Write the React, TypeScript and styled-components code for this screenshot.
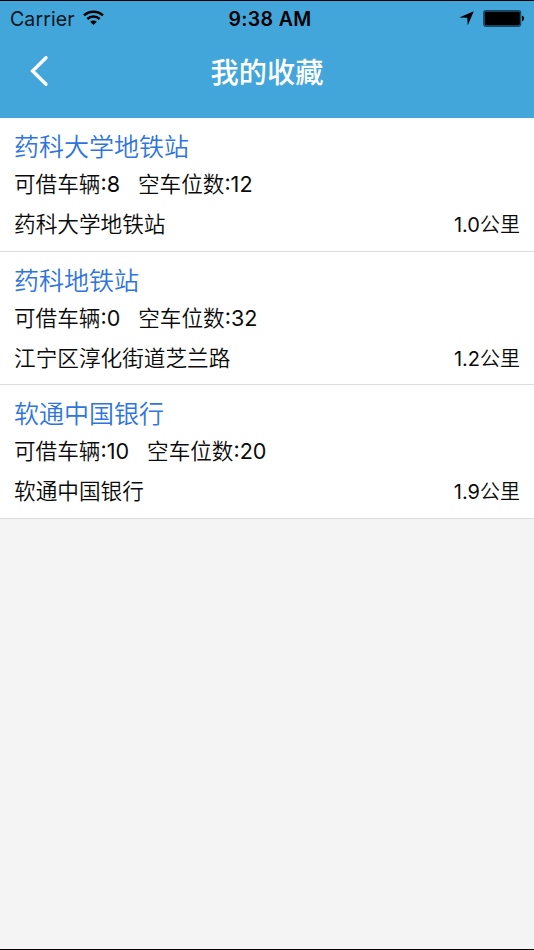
import React from "react";
import styled, { createGlobalStyle } from "styled-components";

const GlobalStyle = createGlobalStyle`
  * { box-sizing: border-box; }
  body { margin: 0; background: #f4f4f4; }
`;

const Screen = styled.div`
  height: 950px;
  display: flex;
  flex-direction: column;
  overflow: hidden;
  background: #f4f4f4;
  border-top: 1px solid #000;
  border-bottom: 1px solid #000;
  font-family: Inter, "Noto Sans CJK SC", sans-serif;
  color: #0b0b0b;
`;

const Header = styled.header`
  flex: none;
  height: 117px;
  background: #42a6db;
`;

const StatusBar = styled.div`
  height: 35px;
  padding: 0 9px 0 10px;
  display: grid;
  grid-template-columns: 1fr auto 1fr;
  align-items: center;
  color: #06131a;
`;

const Carrier = styled.div`
  display: flex;
  align-items: center;
  gap: 8px;
  font-size: 19.5px;
  letter-spacing: 0.1px;

  svg {
    margin-bottom: 2px;
  }
`;

const Clock = styled.div`
  padding-left: 5px;
  font-size: 19.5px;
  font-weight: 600;
  letter-spacing: 0.35px;
  color: #000;
`;

const Indicators = styled.div`
  display: flex;
  justify-content: flex-end;
  align-items: center;
  gap: 9px;
`;

const NavBar = styled.nav`
  height: 70px;
  padding: 0 29px;
  display: grid;
  grid-template-columns: 40px 1fr 40px;
  align-items: center;
`;

const BackButton = styled.button`
  display: flex;
  padding: 0;
  border: 0;
  background: none;
`;

const PageTitle = styled.h1`
  margin: 0;
  padding-top: 4px;
  text-align: center;
  font-size: 28.2px;
  line-height: 40px;
  font-weight: 500;
  color: #fff;
`;

const StationList = styled.ul`
  margin: 0;
  padding: 0;
  list-style: none;
`;

const Station = styled.li`
  height: 133.6px;
  padding: 10px 14px 0 14px;
  background: #fff;
  border-bottom: 1px solid #dcdcdc;
`;

const StationName = styled.div`
  height: 37px;
  line-height: 38px;
  font-size: 25px;
  font-weight: 350;
  color: #2f75e0;
`;

const Counts = styled.div`
  display: flex;
  gap: 18px;
  height: 39px;
  line-height: 39px;
  font-size: 21.6px;
  font-weight: 350;
`;

const Footer = styled.div`
  display: flex;
  justify-content: space-between;
  height: 41px;
  line-height: 41px;
  font-size: 21.65px;
  font-weight: 350;
`;

const Distance = styled.span`
  padding-top: 1px;
  font-size: 20px;
`;

const Figure = styled.span`
  font-weight: 400;
`;

const WifiIcon = () => (
  <svg width="21" height="16" viewBox="0 0 21 16">
    <g fill="none" stroke="#000" strokeWidth="2.5">
      <path d="M1 5.3C6.3.4 14.7.4 20 5.3" />
      <path d="M4.3 9C7.9 5.8 13.1 5.8 16.7 9" />
    </g>
    <path d="M7.2 11.7C9 10.2 12 10.2 13.8 11.7L10.5 15.1Z" fill="#000" />
  </svg>
);

const LocationIcon = () => (
  <svg width="15" height="15" viewBox="0 0 15 15">
    <path d="M14.8 0.2 8.7 14.6 8.3 6.8 0.3 6.5Z" fill="#000" />
  </svg>
);

const BatteryIcon = () => (
  <svg width="42" height="17" viewBox="0 0 42 17">
    <rect x="0.7" y="0.7" width="37" height="15.6" rx="2.2" fill="none" stroke="#16475f" strokeWidth="1.2" />
    <rect x="1.5" y="1.5" width="35.4" height="14" rx="1.4" fill="#000" />
    <path d="M39 5.8C41.8 6.1 41.8 10.9 39 11.2Z" fill="#000" />
  </svg>
);

const BackIcon = () => (
  <svg width="20" height="32" viewBox="0 0 20 32">
    <path d="M17 2.8 3.6 16 17 29.2" fill="none" stroke="#fff" strokeWidth="3.4" strokeLinecap="round" />
  </svg>
);

const stations = [
  { name: "药科大学地铁站", bikes: 8, slots: 12, address: "药科大学地铁站", km: "1.0" },
  { name: "药科地铁站", bikes: 0, slots: 32, address: "江宁区淳化街道芝兰路", km: "1.2" },
  { name: "软通中国银行", bikes: 10, slots: 20, address: "软通中国银行", km: "1.9" },
];

export default function App() {
  return (
    <Screen>
      <GlobalStyle />
      <Header>
        <StatusBar>
          <Carrier>
            Carrier
            <WifiIcon />
          </Carrier>
          <Clock>9:38 AM</Clock>
          <Indicators>
            <LocationIcon />
            <BatteryIcon />
          </Indicators>
        </StatusBar>
        <NavBar>
          <BackButton aria-label="返回">
            <BackIcon />
          </BackButton>
          <PageTitle>我的收藏</PageTitle>
        </NavBar>
      </Header>
      <StationList>
        {stations.map((s) => (
          <Station key={s.name}>
            <StationName>{s.name}</StationName>
            <Counts>
              <span>
                可借车辆<Figure>:{s.bikes}</Figure>
              </span>
              <span>
                空车位数<Figure>:{s.slots}</Figure>
              </span>
            </Counts>
            <Footer>
              <span>{s.address}</span>
              <Distance>
                <Figure>{s.km}</Figure>公里
              </Distance>
            </Footer>
          </Station>
        ))}
      </StationList>
    </Screen>
  );
}
